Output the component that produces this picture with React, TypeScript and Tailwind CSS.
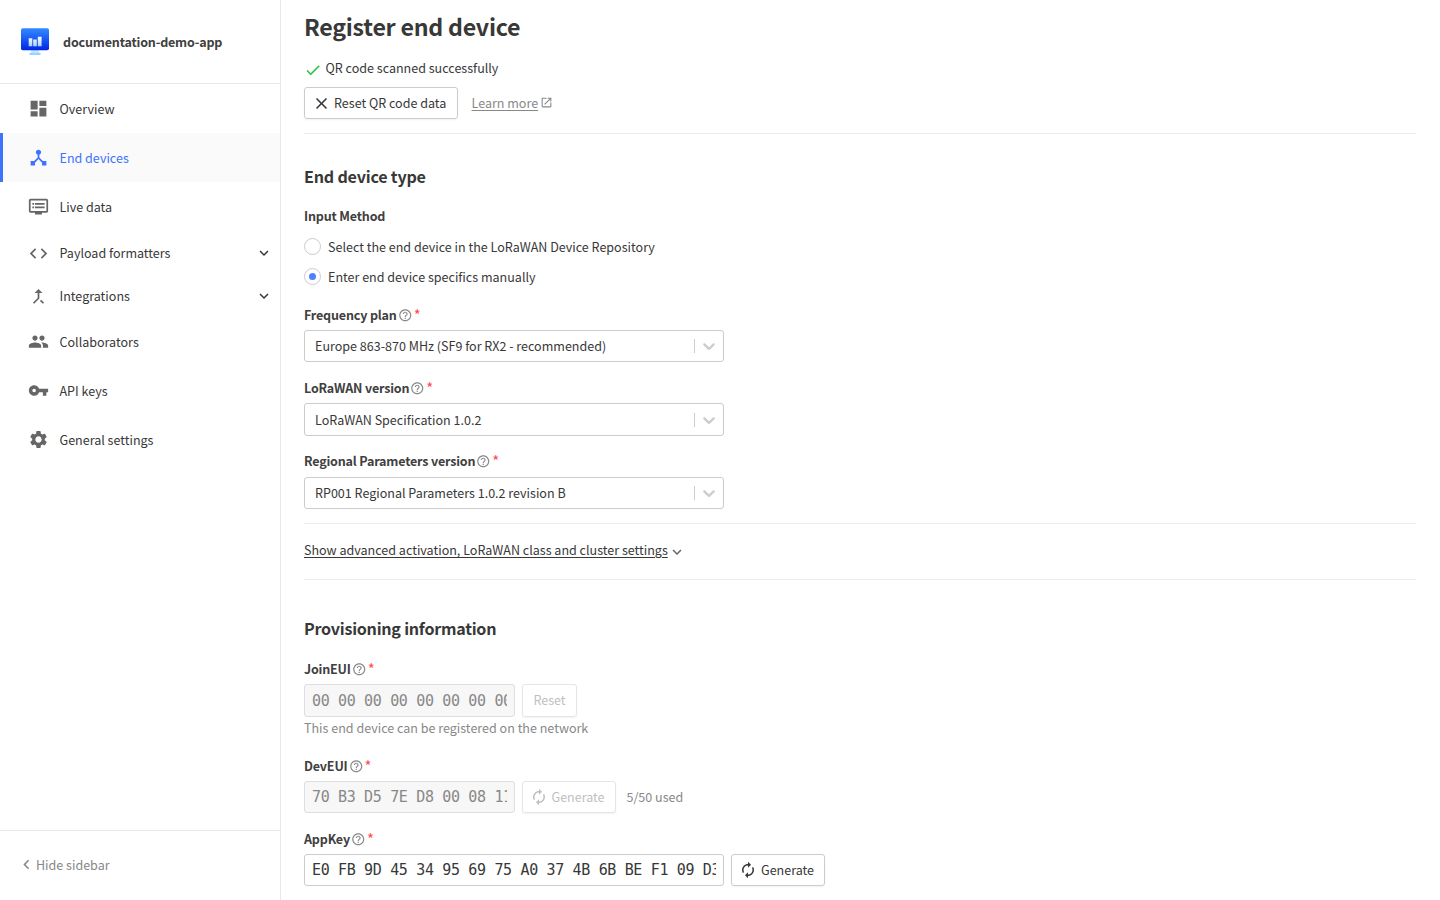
import type { ReactNode } from 'react'
import type { IconType } from 'react-icons'
import {
  MdAutorenew,
  MdCallMerge,
  MdCheck,
  MdClose,
  MdCode,
  MdDashboard,
  MdDeviceHub,
  MdDvr,
  MdExpandMore,
  MdHelpOutline,
  MdKeyboardArrowLeft,
  MdLaunch,
  MdPeople,
  MdSettings,
  MdVpnKey,
} from 'react-icons/md'

type NavEntry = { label: string; icon: IconType; height: string; active?: boolean; expandable?: boolean }

const nav: NavEntry[] = [
  { label: 'Overview', icon: MdDashboard, height: 'h-[49px]' },
  { label: 'End devices', icon: MdDeviceHub, height: 'h-[49px]', active: true },
  { label: 'Live data', icon: MdDvr, height: 'h-[49px]' },
  { label: 'Payload formatters', icon: MdCode, height: 'h-11', expandable: true },
  { label: 'Integrations', icon: MdCallMerge, height: 'h-[42px]', expandable: true },
  { label: 'Collaborators', icon: MdPeople, height: 'h-[49px]' },
  { label: 'API keys', icon: MdVpnKey, height: 'h-[49px]' },
  { label: 'General settings', icon: MdSettings, height: 'h-[49px]' },
]

function AppLogo() {
  return (
    <svg width="28" height="28" viewBox="0 0 28 28" className="shrink-0">
      <defs>
        <linearGradient id="screen" x1="0" y1="0" x2="0" y2="1">
          <stop offset="0" stopColor="#338bff" />
          <stop offset="1" stopColor="#0026e5" />
        </linearGradient>
        <linearGradient id="bars" x1="0" y1="0" x2="0" y2="1">
          <stop offset="0" stopColor="#fff" />
          <stop offset="1" stopColor="#a9d3ff" />
        </linearGradient>
      </defs>
      <path d="M10 22h8v3h-8z" fill="#c5e8ff" />
      <rect x="8.3" y="24.8" width="11.4" height="2.2" rx="1" fill="#9bd3ff" />
      <rect x="0" y="0.3" width="28" height="21.9" rx="1.8" fill="url(#screen)" />
      <path d="M7.7 10.2h3.6v8H7.7zM12.2 11.4h3.6v6.8h-3.6zM16.8 8.8h3.8v9.4h-3.8z" fill="url(#bars)" />
    </svg>
  )
}

function Sidebar() {
  return (
    <aside className="flex w-[281px] shrink-0 flex-col border-r border-[#e8e8e8]">
      <div className="flex h-[84px] items-center gap-3.5 border-b border-[#e8e8e8] pl-[21px]">
        <AppLogo />
        <span className="font-semibold tracking-[-0.18px] text-[#404040]">documentation-demo-app</span>
      </div>
      <nav className="flex flex-col">
        {nav.map(({ label, icon: Icon, height, active, expandable }) => (
          <a
            key={label}
            className={`flex items-center border-l-3 pr-[7px] pl-[25px] ${height} ${
              active ? 'border-[#3d73ff] bg-[#fafafa] text-[#3d73ff]' : 'border-transparent'
            }`}
          >
            <Icon size={21} className={active ? '' : 'text-[#666]'} />
            <span className="ml-[10.5px] grow">{label}</span>
            {expandable && <MdExpandMore size={18} />}
          </a>
        ))}
      </nav>
      <div className="mt-auto flex h-[70px] items-center border-t border-[#e8e8e8] pb-0.5 pl-[17px] text-[#888]">
        <MdKeyboardArrowLeft size={19} />
        <span>Hide sidebar</span>
      </div>
    </aside>
  )
}

function Label({ children, className = '' }: { children: ReactNode; className?: string }) {
  return (
    <div className={`flex h-5 items-center ${className}`}>
      <span className="font-semibold tracking-[-0.18px] text-[#404040]">{children}</span>
      <MdHelpOutline size={14.5} className="ml-px text-[#888]" />
      <span className="ml-[1.5px] text-[15px] text-[#ff4d4d]">*</span>
    </div>
  )
}

function Select({ value, height = 'h-8' }: { value: string; height?: string }) {
  return (
    <div className={`flex w-[420px] items-center rounded-[3px] border border-[#ccc] pl-2.5 ${height}`}>
      <span className="grow">{value}</span>
      <span className="h-3.5 w-px bg-[#ccc]" />
      <svg width="20" height="20" viewBox="0 0 20 20" fill="#ccc" className="mx-1">
        <path d="M4.516 7.548c0.436-0.446 1.043-0.481 1.576 0l3.908 3.747 3.908-3.747c0.533-0.481 1.141-0.446 1.574 0 0.436 0.445 0.408 1.197 0 1.615-0.406 0.418-4.695 4.502-4.695 4.502-0.217 0.223-0.502 0.335-0.787 0.335s-0.57-0.112-0.789-0.335c0 0-4.287-4.084-4.695-4.502s-0.436-1.17 0-1.615z" />
      </svg>
    </div>
  )
}

function Radio({ label, checked, className = '' }: { label: string; checked?: boolean; className?: string }) {
  return (
    <div className={`flex h-5 items-center gap-[7px] ${className}`}>
      <span className="-mt-px flex size-[17px] items-center justify-center rounded-full border border-[#ccc]">
        {checked && <span className="size-[7px] rounded-full bg-[#4f80ff]" />}
      </span>
      <span>{label}</span>
    </div>
  )
}

function ByteInput({ value, className }: { value: string; className: string }) {
  return (
    <div className={`rounded-[3px] border px-[7px] ${className}`}>
      <div className="flex h-full items-center overflow-hidden font-['DejaVu_Sans_Mono',monospace] text-[15px] tracking-[-0.345px] whitespace-pre">
        {value}
      </div>
    </div>
  )
}

function Button({ children, className = '' }: { children: ReactNode; className?: string }) {
  return (
    <button
      className={`flex items-center rounded-[3px] border shadow-[0_1px_2px_rgba(0,0,0,0.06)] ${className}`}
    >
      {children}
    </button>
  )
}

export default function App() {
  return (
    <div className="flex h-[900px] w-[1440px] overflow-hidden bg-white font-['Noto_Sans_CJK_SC',sans-serif] text-[12.54px] leading-5 whitespace-nowrap text-[#383838]">
      <Sidebar />
      <main className="flex grow flex-col pr-6 pl-[23px]">
        <h1 className="flex h-[54px] items-center pb-0.5 text-[23.2px] font-semibold tracking-[-0.25px]">
          Register end device
        </h1>
        <div className="flex h-[29px] items-center pb-px">
          <MdCheck size={18} className="mt-[3px] text-[#1fc13a]" />
          <span className="ml-[3.5px]">QR code scanned successfully</span>
        </div>
        <div className="mt-1 flex h-8 items-center">
          <Button className="h-8 w-[154px] border-[#ccc] pl-[7px]">
            <MdClose size={19} />
            <span className="ml-[3px]">Reset QR code data</span>
          </Button>
          <a className="ml-[13.5px] text-[#888] underline underline-offset-2">Learn more</a>
          <MdLaunch size={13} className="-mt-px ml-[1.5px] text-[#888]" />
        </div>
        <hr className="mt-3.5 border-[#ebebeb]" />

        <h2 className="mt-[27px] flex h-[30px] items-center text-[16.1px] font-semibold tracking-[-0.2px]">
          End device type
        </h2>
        <div className="mt-[15px] h-5 font-semibold tracking-[-0.18px] text-[#404040]">Input Method</div>
        <Radio className="mt-[11px]" label="Select the end device in the LoRaWAN Device Repository" />
        <Radio className="mt-2.5" label="Enter end device specifics manually" checked />

        <Label className="mt-[18px] mb-[5px]">Frequency plan</Label>
        <Select value="Europe 863-870 MHz (SF9 for RX2 - recommended)" />
        <Label className="mt-4 mb-[5px]">LoRaWAN version</Label>
        <Select value="LoRaWAN Specification 1.0.2" height="h-[33px]" />
        <Label className="mt-[15px] mb-1.5">Regional Parameters version</Label>
        <Select value="RP001 Regional Parameters 1.0.2 revision B" />
        <hr className="mt-3.5 border-[#ebebeb]" />

        <div className="mt-4 flex h-5 items-center">
          <a className="underline underline-offset-2">
            Show advanced activation, LoRaWAN class and cluster settings
          </a>
          <MdExpandMore size={18} className="mt-[3px] text-[#666]" />
        </div>
        <hr className="mt-[19px] border-[#ebebeb]" />

        <h2 className="mt-[33px] flex h-[30px] items-center text-[16.1px] font-semibold tracking-[-0.25px]">
          Provisioning information
        </h2>
        <Label className="mt-4 mb-[5px]">JoinEUI</Label>
        <div className="flex h-[33px] gap-[7px]">
          <ByteInput value="00 00 00 00 00 00 00 00" className="w-[211px] border-[#dedede] bg-[#f7f7f7] text-[#888]" />
          <Button className="w-[55px] justify-center border-[#e5e5e5] pb-px text-[#bfbfbf]">Reset</Button>
        </div>
        <div className="mt-px h-5 text-[#888]">This end device can be registered on the network</div>
        <Label className="mt-[18px] mb-[5px]">DevEUI</Label>
        <div className="flex h-8 items-center gap-[7px]">
          <ByteInput value="70 B3 D5 7E D8 00 08 11" className="h-8 w-[211px] border-[#dedede] bg-[#f7f7f7] text-[#888]" />
          <Button className="h-8 w-[94px] border-[#e5e5e5] pl-[7px] text-[#bfbfbf]">
            <MdAutorenew size={18} />
            <span className="ml-[3.5px]">Generate</span>
          </Button>
          <span className="ml-[3.5px] text-[#888]">5/50 used</span>
        </div>
        <Label className="mt-4 mb-[5px]">AppKey</Label>
        <div className="flex h-8 gap-[7px]">
          <ByteInput value="E0 FB 9D 45 34 95 69 75 A0 37 4B 6B BE F1 09 D3" className="w-[420px] border-[#ccc]" />
          <Button className="w-[94px] border-[#ccc] pl-[7px]">
            <MdAutorenew size={18} />
            <span className="ml-1">Generate</span>
          </Button>
        </div>
      </main>
    </div>
  )
}
